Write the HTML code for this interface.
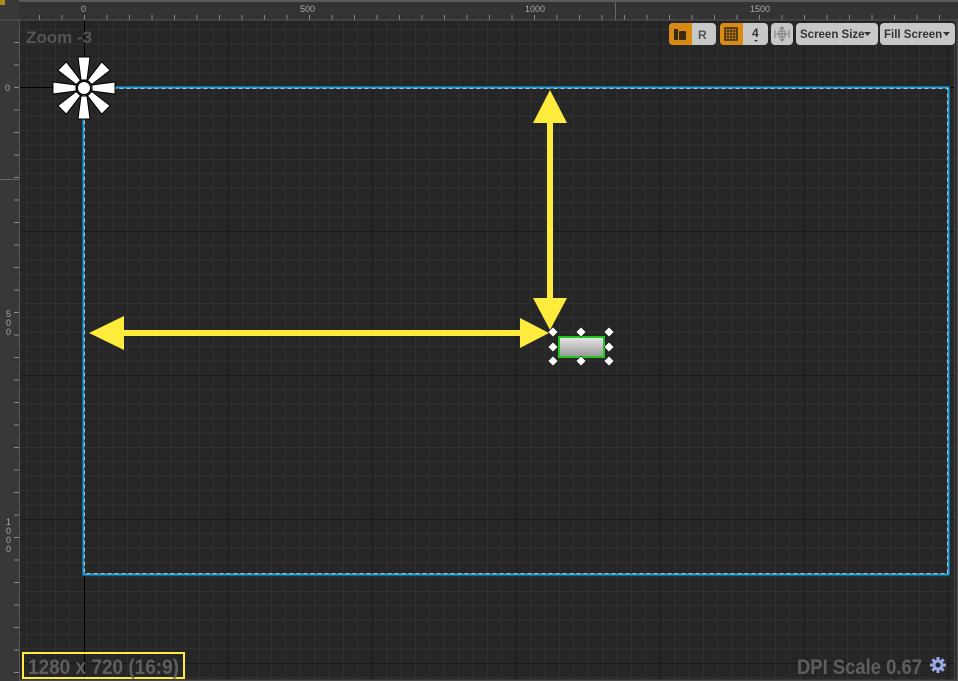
<!DOCTYPE html>
<html><head><style>
html,body{margin:0;padding:0;background:#262626;width:958px;height:681px;overflow:hidden}
svg{display:block}
text{font-family:"Liberation Sans",sans-serif}
</style></head><body>
<svg width="958" height="681" viewBox="0 0 958 681" xmlns="http://www.w3.org/2000/svg">
<defs>
<pattern id="minor" x="84" y="87" width="14.4" height="14.4" patternUnits="userSpaceOnUse">
<path d="M0 0H14.4M0 0V14.4" stroke="#383838" stroke-width="1" fill="none"/>
</pattern>
<pattern id="major" x="84" y="87" width="144" height="144" patternUnits="userSpaceOnUse">
<path d="M0.5 0V144M0 0.5H144" stroke="#1a1a1a" stroke-width="1" fill="none"/>
</pattern>
<pattern id="tx" x="84" y="0" width="22.5" height="20" patternUnits="userSpaceOnUse">
<path d="M0.5 15V20" stroke="#888" stroke-width="1"/>
</pattern>
<pattern id="ty" x="0" y="87" width="20" height="22.5" patternUnits="userSpaceOnUse">
<path d="M14 0.5H19" stroke="#888" stroke-width="1"/>
</pattern>
<linearGradient id="btn" x1="0" y1="0" x2="0" y2="1"><stop offset="0" stop-color="#e4e4e4"/><stop offset="1" stop-color="#9a9a9a"/></linearGradient>
</defs>
<rect x="0" y="0" width="958" height="681" fill="#262626"/>
<rect x="20" y="20" width="935" height="660" fill="url(#minor)"/>
<rect x="20" y="20" width="935" height="660" fill="url(#major)"/>
<line x1="84.5" y1="20" x2="84.5" y2="680" stroke="#000" stroke-width="1"/>
<line x1="20" y1="87.5" x2="955" y2="87.5" stroke="#000" stroke-width="1"/>
<!-- frame -->
<rect x="0" y="0" width="958" height="681" fill="none" stroke="#4a4a4a" stroke-width="3"/>
<line x1="954.5" y1="20" x2="954.5" y2="681" stroke="#444"/>
<!-- rulers -->
<rect x="0" y="0" width="958" height="20" fill="#333"/>
<rect x="0" y="0" width="958" height="2" fill="#5a5a5a"/>
<rect x="0" y="0" width="19" height="681" fill="#383838"/>
<rect x="20" y="0" width="938" height="20" fill="url(#tx)"/>
<rect x="0" y="20" width="20" height="661" fill="url(#ty)"/>
<line x1="19.5" y1="20" x2="19.5" y2="681" stroke="#555"/>
<line x1="0" y1="20" x2="958" y2="20" stroke="#555"/>
<rect x="0" y="0" width="5" height="5" fill="#b08a20"/>
<g fill="#aaa" font-size="9">
<text x="81" y="12">0</text><text x="300" y="12">500</text><text x="525" y="12">1000</text><text x="750" y="12">1500</text>
<text x="5" y="91">0</text>
<text x="6" y="317">5</text><text x="6" y="326">0</text><text x="6" y="335">0</text>
<text x="6" y="525">1</text><text x="6" y="534">0</text><text x="6" y="543">0</text><text x="6" y="552">0</text>
</g>
<line x1="19" y1="179.5" x2="0" y2="179.5" stroke="#666"/>
<line x1="615.5" y1="2" x2="615.5" y2="20" stroke="#666"/>
<!-- screen rect -->
<rect x="83.5" y="87.5" width="865" height="487" fill="none" stroke="#16a7e6" stroke-width="2"/>
<rect x="84.5" y="88.5" width="863" height="485" fill="none" stroke="#bbb" stroke-width="1" stroke-dasharray="4 3"/>
<!-- arrows -->
<g fill="#ffeb3b">
<rect x="547" y="120" width="6" height="182"/>
<polygon points="550,90 567,123 533,123"/>
<polygon points="550,330 567,298 533,298"/>
<rect x="120" y="330" width="404" height="6"/>
<polygon points="89,333 124,316 124,350"/>
<polygon points="549,333 520,318 520,348"/>
</g>
<!-- widget -->
<rect x="558" y="336" width="47" height="22" fill="#1ec81e"/>
<rect x="560" y="338" width="43" height="18" fill="url(#btn)"/>
<g fill="#fff" stroke="#222" stroke-width="0.6">
<rect x="549.5" y="328.5" width="7" height="7" transform="rotate(45 553 332)"/>
<rect x="577.5" y="328.5" width="7" height="7" transform="rotate(45 581 332)"/>
<rect x="605.5" y="328.5" width="7" height="7" transform="rotate(45 609 332)"/>
<rect x="549.5" y="343.5" width="7" height="7" transform="rotate(45 553 347)"/>
<rect x="605.5" y="343.5" width="7" height="7" transform="rotate(45 609 347)"/>
<rect x="549.5" y="357.5" width="7" height="7" transform="rotate(45 553 361)"/>
<rect x="577.5" y="357.5" width="7" height="7" transform="rotate(45 581 361)"/>
<rect x="605.5" y="357.5" width="7" height="7" transform="rotate(45 609 361)"/>
</g>
<!-- anchor flower -->
<g transform="translate(84,88)" fill="#fff" stroke="#000" stroke-width="1">
<g id="p"><polygon points="-3,-8 3,-8 6,-31 -6,-31"/></g>
<use href="#p" transform="rotate(45)"/><use href="#p" transform="rotate(90)"/><use href="#p" transform="rotate(135)"/>
<use href="#p" transform="rotate(180)"/><use href="#p" transform="rotate(225)"/><use href="#p" transform="rotate(270)"/><use href="#p" transform="rotate(315)"/>
<circle r="6.5"/>
</g>
<!-- texts -->
<text x="26" y="43" font-size="17" font-weight="bold" fill="#555">Zoom -3</text>
<rect x="23" y="653" width="161" height="25" fill="none" stroke="#ffeb3b" stroke-width="2"/>
<text x="28" y="674" font-size="21" font-weight="bold" fill="#5e5e5e" textLength="151" lengthAdjust="spacingAndGlyphs">1280 x 720 (16:9)</text>
<text x="797" y="674" font-size="21" font-weight="bold" fill="#5e5e5e" textLength="125" lengthAdjust="spacingAndGlyphs">DPI Scale 0.67</text>
<g transform="translate(938,665)" fill="#9aa8e8">
<circle r="5.5"/>
<rect x="-1.5" y="-8" width="3" height="16"/><rect x="-8" y="-1.5" width="16" height="3"/>
<rect x="-1.5" y="-8" width="3" height="16" transform="rotate(45)"/><rect x="-1.5" y="-8" width="3" height="16" transform="rotate(-45)"/>
<circle r="2.5" fill="#262626"/>
</g>
<!-- toolbar -->
<g font-size="12" font-weight="bold">
<rect x="669" y="23" width="47" height="22" rx="4" fill="#c8c8c8"/>
<path d="M673 23h19v22h-19a4 4 0 0 1-4-4v-14a4 4 0 0 1 4-4z" fill="#d98a15"/>
<rect x="674" y="29" width="4" height="11" fill="#3a2a10"/><rect x="679" y="31" width="7" height="9" rx="1" fill="#3a2a10"/>
<text x="698" y="39" fill="#555">R</text>
<rect x="720" y="23" width="48" height="22" rx="4" fill="#c8c8c8"/>
<path d="M724 23h19v22h-19a4 4 0 0 1-4-4v-14a4 4 0 0 1 4-4z" fill="#d98a15"/>
<rect x="725" y="28" width="12" height="12" fill="none" stroke="#3a2a10" stroke-width="1.5"/>
<path d="M728 28v12M731 28v12M734 28v12M725 31h12M725 34h12M725 37h12" stroke="#3a2a10" stroke-width="1"/>
<text x="752" y="37" fill="#333">4</text>
<path d="M754 40l2 2 2-2z" fill="#333"/>
<rect x="771" y="23" width="22" height="22" rx="4" fill="#c8c8c8"/>
<path d="M782 27v14M776 34h12M780 29l2-2 2 2M780 39l2 2 2-2M775 30v8M789 30v8" stroke="#777" stroke-width="1" fill="none"/>
<rect x="779" y="31" width="6" height="6" fill="none" stroke="#777"/>
<rect x="796" y="23" width="82" height="22" rx="4" fill="#c8c8c8"/>
<text x="800" y="38" fill="#333" font-size="11.5">Screen Size</text>
<path d="M864 32h7l-3.5 4z" fill="#333"/>
<rect x="880" y="23" width="75" height="22" rx="4" fill="#c8c8c8"/>
<text x="884" y="38" fill="#333" font-size="11.5">Fill Screen</text>
<path d="M943 32h7l-3.5 4z" fill="#333"/>
</g>
</svg>
</body></html>
